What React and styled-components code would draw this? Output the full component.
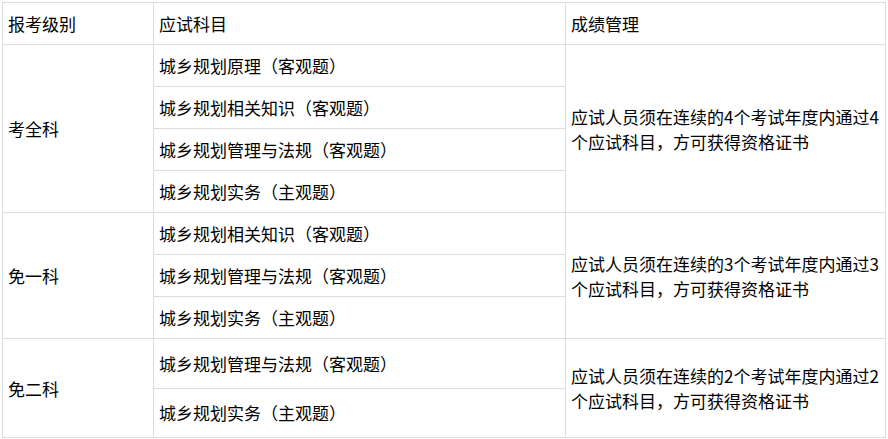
import React from 'react';
import styled, { createGlobalStyle } from 'styled-components';

const GlobalStyle = createGlobalStyle`
    body {
        margin: 0;
        background-color: #fff;
        font-family: "Noto Sans CJK SC", "Noto Sans", sans-serif;
    }
`;

const Wrapper = styled.div`
    padding: 2px;
`;

const Table = styled.table`
    border-collapse: collapse;
    table-layout: fixed;
    width: 883px;
    color: #000;
    font-size: 17px;
    line-height: 25px;
`;

const Cell = styled.td`
    border: 1px solid #dcdcdc;
    padding: 8px 4px 8px 5px;
    vertical-align: middle;
    text-align: left;
    font-weight: normal;
`;

const HeadCell = styled(Cell).attrs({ as: 'th' })``;

const Note = styled.p`
    margin: 16px 0;
`;

const groups = [
    {
        level: '考全科',
        count: 4,
        subjects: [
            '城乡规划原理（客观题）',
            '城乡规划相关知识（客观题）',
            '城乡规划管理与法规（客观题）',
            '城乡规划实务（主观题）',
        ],
    },
    {
        level: '免一科',
        count: 3,
        subjects: [
            '城乡规划相关知识（客观题）',
            '城乡规划管理与法规（客观题）',
            '城乡规划实务（主观题）',
        ],
    },
    {
        level: '免二科',
        count: 2,
        subjects: [
            '城乡规划管理与法规（客观题）',
            '城乡规划实务（主观题）',
        ],
    },
];

const App = () => {
    return (
        <Wrapper>
            <GlobalStyle />
            <Table>
                <colgroup>
                    <col style={{ width: 151 }} />
                    <col style={{ width: 412 }} />
                    <col style={{ width: 320 }} />
                </colgroup>
                <thead>
                    <tr>
                        <HeadCell>报考级别</HeadCell>
                        <HeadCell>应试科目</HeadCell>
                        <HeadCell>成绩管理</HeadCell>
                    </tr>
                </thead>
                <tbody>
                    {groups.map((g) =>
                        g.subjects.map((subject, i) => (
                            <tr key={g.level + i}>
                                {i === 0 && <Cell rowSpan={g.subjects.length}>{g.level}</Cell>}
                                <Cell>{subject}</Cell>
                                {i === 0 && (
                                    <Cell rowSpan={g.subjects.length}>
                                        <Note>
                                            应试人员须在连续的{g.count}个考试年度内通过{g.count}个应试科目，方可获得资格证书
                                        </Note>
                                    </Cell>
                                )}
                            </tr>
                        ))
                    )}
                </tbody>
            </Table>
        </Wrapper>
    );
};

export default App;
